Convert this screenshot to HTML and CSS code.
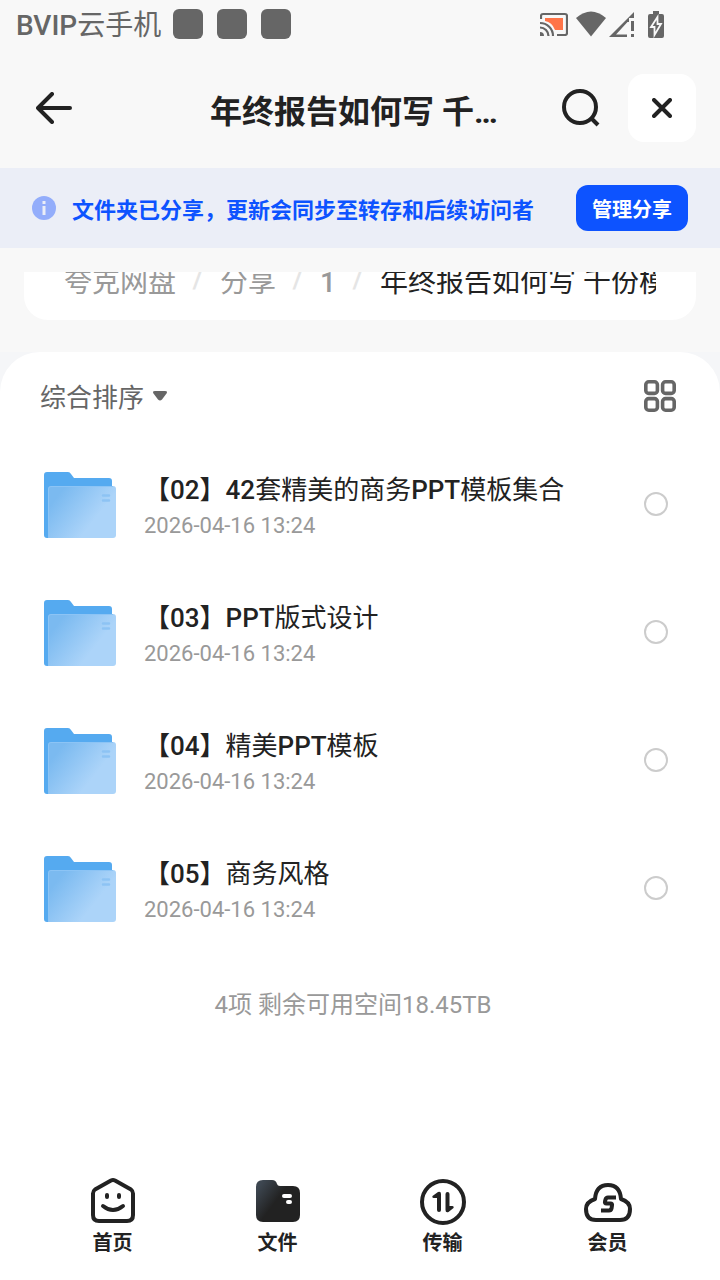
FILE: index.html
```html
<!DOCTYPE html>
<html lang="zh-CN">
<head>
  <meta charset="UTF-8" />
  <meta name="viewport" content="width=device-width, initial-scale=1.0"/>
  <title>年终报告如何写 千份模板</title>
  <link rel="stylesheet" href="styles.css">
</head>
<body>

  <!-- shared folder icon -->
  <svg class="defs" width="0" height="0" aria-hidden="true">
    <defs>
      <linearGradient id="folderFront" x1="0" y1="0.2" x2="1" y2="0.8">
        <stop offset="0.1" stop-color="#7bbaf0"/>
        <stop offset="0.7" stop-color="#acd4f9"/>
      </linearGradient>
      <linearGradient id="tabFolder" x1="0" y1="0.1" x2="0.7" y2="0.6">
        <stop offset="0.1" stop-color="#3d4650"/>
        <stop offset="0.7" stop-color="#222"/>
      </linearGradient>
      <symbol id="folder" viewBox="0 0 72 66">
        <path fill="#55aaf0" d="M3 0h21q2 0 3 2l3 4h35q3 0 3 3v57H3q-3 0-3-3V3q0-3 3-3z"/>
        <path fill="url(#folderFront)" d="M7 14h62q3 0 3 3v46q0 3-3 3H4V17q0-3 3-3z"/>
        <path fill="none" stroke="#8cc4f5" stroke-width="1" d="M4.500 66V17q0-2.500 2.500-2.500h62"/>
        <path stroke="#8dc3f4" stroke-width="2.500" stroke-linecap="round" d="M59 23.500h6M59 28.500h6"/>
      </symbol>
    </defs>
  </svg>

  <div class="status-bar">
    <span class="carrier"><b>BVIP</b>云手机</span>
    <span class="notice-dot"></span>
    <span class="notice-dot"></span>
    <span class="notice-dot"></span>
    <div class="status-icons">
      <svg class="cast" width="28" height="24" viewBox="0 0 28 24">
        <path fill="#ff7448" d="M5 6h18v12h-8Q12 10 5 9z"/>
        <path fill="none" stroke="#666" stroke-width="2.200" d="M1 7V4q0-2 2-2h22q2 0 2 2v17q0 2-2 2h-8"/>
        <path fill="none" stroke="#666" stroke-width="2.200" d="M0 11a13 13 0 0 1 13 13M0 15.500a8.500 8.500 0 0 1 8.500 8.500"/>
        <path fill="#666" d="M0 20a4 4 0 0 1 4 4H0z"/>
      </svg>
      <svg width="30" height="26" viewBox="0 0 30 26">
        <path fill="#666" d="M0 7Q15-6 30 7L15 25.500z"/>
      </svg>
      <svg width="25" height="26" viewBox="0 0 25 26">
        <path fill="#666" fill-rule="evenodd" d="M25 1v6h-5v4h-1.500L7 23.500h11V26H0z"/>
        <path fill="#666" d="M22 10h3v10h-3zM22 23h3v3h-3z"/>
      </svg>
      <svg class="battery" width="16" height="27" viewBox="0 0 16 27">
        <path fill="#666" d="M5 0h6v3h3q2 0 2 2v20q0 2-2 2H2q-2 0-2-2V5q0-2 2-2h3z"/>
        <path fill="#666" stroke="#f8f8f8" stroke-width="1.800" d="M9.500 6L3 16h3.500v8L13 13H9.500z"/>
      </svg>
    </div>
  </div>

  <header class="header">
    <button class="back-btn" type="button" aria-label="返回">
      <svg width="36" height="32" viewBox="0 0 36 32" fill="none" stroke="#222" stroke-width="4" stroke-linecap="round" stroke-linejoin="round">
        <path d="M34 16H2M16 2L2 16l14 14"/>
      </svg>
    </button>
    <h1 class="title">年终报告如何写 千份模板</h1>
    <div class="actions">
      <button class="search-btn" type="button" aria-label="搜索">
        <svg width="38" height="38" viewBox="0 0 38 38" fill="none" stroke="#222" stroke-width="4">
          <circle cx="18" cy="18" r="16"/>
          <path d="M29 29l7 7"/>
        </svg>
      </button>
      <button class="close-btn" type="button" aria-label="关闭">
        <svg width="20" height="20" viewBox="0 0 20 20" stroke="#222" stroke-width="4" stroke-linecap="round">
          <path d="M2 2l16 16M18 2L2 18"/>
        </svg>
      </button>
    </div>
  </header>

  <div class="share-notice">
    <svg width="24" height="24" viewBox="0 0 24 24">
      <circle cx="12" cy="12" r="12" fill="#93adfb"/>
      <path fill="#ebeef7" d="M10.500 5h3v3h-3zM10.500 10h3v9h-3z"/>
    </svg>
    <span class="share-text">文件夹已分享，更新会同步至转存和后续访问者</span>
    <button class="manage-btn" type="button">管理分享</button>
  </div>

  <nav class="breadcrumb" aria-label="路径">
    <div class="crumbs">
      <a href="#">夸克网盘</a>
      <span class="slash">/</span>
      <a href="#">分享</a>
      <span class="slash">/</span>
      <a href="#"><b>1</b></a>
      <span class="slash">/</span>
      <span class="current">年终报告如何写 千份模板</span>
    </div>
  </nav>

  <div class="panel-wrap">
    <main class="panel">
      <div class="toolbar">
        <label class="sort">
          <select aria-label="排序方式">
            <option>综合排序</option>
          </select>
          <svg width="14" height="10" viewBox="0 0 14 10">
            <path fill="#666" d="M2 0h10q3 0 1.500 2.500L9 8.500q-2 2-4 0L.5 2.500Q-1 0 2 0z"/>
          </svg>
        </label>
        <button class="grid-btn" type="button" aria-label="网格视图">
          <svg width="32" height="32" viewBox="0 0 32 32" fill="none" stroke="#666" stroke-width="3.600">
            <rect x="1.800" y="1.800" width="11.600" height="11.600" rx="3"/>
            <rect x="18.600" y="1.800" width="11.600" height="11.600" rx="3"/>
            <rect x="1.800" y="18.600" width="11.600" height="11.600" rx="3"/>
            <rect x="18.600" y="18.600" width="11.600" height="11.600" rx="3"/>
          </svg>
        </button>
      </div>

      <ul class="file-list">
        <li class="file">
          <svg width="72" height="66"><use href="#folder"/></svg>
          <label class="file-info" for="file1">
            <span class="file-name"><b>【02】42</b>套精美的商务<b>PPT</b>模板集合</span>
            <span class="file-date">2026-04-16 13:24</span>
          </label>
          <input type="checkbox" id="file1">
        </li>
        <li class="file">
          <svg width="72" height="66"><use href="#folder"/></svg>
          <label class="file-info" for="file2">
            <span class="file-name"><b>【03】PPT</b>版式设计</span>
            <span class="file-date">2026-04-16 13:24</span>
          </label>
          <input type="checkbox" id="file2">
        </li>
        <li class="file">
          <svg width="72" height="66"><use href="#folder"/></svg>
          <label class="file-info" for="file3">
            <span class="file-name"><b>【04】</b>精美<b>PPT</b>模板</span>
            <span class="file-date">2026-04-16 13:24</span>
          </label>
          <input type="checkbox" id="file3">
        </li>
        <li class="file">
          <svg width="72" height="66"><use href="#folder"/></svg>
          <label class="file-info" for="file4">
            <span class="file-name"><b>【05】</b>商务风格</span>
            <span class="file-date">2026-04-16 13:24</span>
          </label>
          <input type="checkbox" id="file4">
        </li>
      </ul>

      <p class="summary">4项 剩余可用空间18.45TB</p>
    </main>
  </div>

  <nav class="tab-bar" aria-label="主导航">
    <a href="#" class="tab">
      <svg width="48" height="48" viewBox="0 0 48 48" fill="none" stroke="#222" stroke-width="4" stroke-linecap="round" stroke-linejoin="round">
        <path d="M22 3.500q2-1 4 0l16 9q2 1.500 2 4V38q0 6-6 6H10q-6 0-6-6V16.500q0-2.500 2-4z"/>
        <path d="M14 29q10 8 20 0"/>
        <path d="M18 18v2M30 18v2"/>
      </svg>
      <span>首页</span>
    </a>
    <a href="#" class="tab active">
      <svg width="48" height="48" viewBox="0 0 48 48">
        <path fill="url(#tabFolder)" d="M9 3h9q4 0 5 4 .5 2 3 2h13q7 0 7 7v22q0 7-7 7H9q-7 0-7-7V10q0-7 7-7z"/>
        <path stroke="#fff" stroke-width="4" stroke-linecap="round" d="M30 19h6M34 25h2"/>
      </svg>
      <span>文件</span>
    </a>
    <a href="#" class="tab">
      <svg width="48" height="48" viewBox="0 0 48 48">
        <circle cx="24" cy="25" r="21" fill="none" stroke="#222" stroke-width="4"/>
        <path fill="#222" d="M13.500 19l5.500-4q3-1 3 2v16q0 2-2 2t-2-2V21h-3.500q-2-.5-1-2zM34.500 31l-5 4q-3 1-3-2V17q0-2 2-2t2 2v12h3q2 .5 1 2z"/>
      </svg>
      <span>传输</span>
    </a>
    <a href="#" class="tab">
      <svg width="48" height="48" viewBox="0 0 48 48">
        <path fill="none" stroke="#222" stroke-width="4" stroke-linejoin="round" d="M11 22Q12 8 24 8t13 14q9 3 9 10 0 11-10 11H12Q2 43 2 32q0-7 9-10z"/>
        <path fill="none" stroke="#222" stroke-width="4" d="M32 20.500h-8q-2 0-2.500 2l-.5 2q-.5 2 1.500 2h4q2 0 1.500 2l-.5 3q-.5 2-2.500 2h-8"/>
      </svg>
      <span>会员</span>
    </a>
  </nav>

</body>
</html>
```

FILE: styles.css
```css
* {
  box-sizing: border-box;
}

body {
  margin: 0;
  font-family: Roboto, "Noto Sans CJK SC", sans-serif;
  background: #f8f8f8;
  color: #222;
  display: flex;
  flex-direction: column;
  min-height: 100vh;
}

button {
  border: none;
  background: none;
  padding: 0;
  font-family: inherit;
  cursor: pointer;
}

svg {
  display: block;
  flex-shrink: 0;
}

a {
  color: inherit;
  text-decoration: none;
}

b {
  font-weight: 500;
}

.defs {
  position: absolute;
}

.status-bar {
  display: flex;
  align-items: center;
  gap: 14px;
  height: 48px;
  padding: 0 56px 0 16px;
  color: #666;
}

.carrier {
  padding-top: 4px;
  font-size: 28px;
  line-height: 40px;
  margin-right: -2px;
}

.notice-dot {
  width: 30px;
  height: 30px;
  border-radius: 6px;
  background: #666;
}

.status-icons {
  display: flex;
  align-items: center;
  gap: 3px;
  margin-left: auto;
}

.cast {
  margin-right: 5px;
}

.battery {
  margin-left: 11px;
}

.header {
  display: grid;
  grid-template-columns: 1fr auto 1fr;
  align-items: center;
  height: 120px;
  padding: 0 24px 0 12px;
}

.back-btn {
  justify-self: start;
  padding: 20px 24px;
}

.title {
  margin: 0;
  padding-top: 8px;
  max-width: 288px;
  font-size: 32px;
  line-height: 48px;
  font-weight: bold;
  white-space: nowrap;
  overflow: hidden;
  text-overflow: ellipsis;
}

.actions {
  display: flex;
  align-items: center;
  justify-content: flex-end;
  gap: 28px;
}

.close-btn {
  display: flex;
  align-items: center;
  justify-content: center;
  width: 68px;
  height: 68px;
  border-radius: 16px;
  background: #fff;
}

.share-notice {
  display: flex;
  align-items: center;
  min-height: 80px;
  padding: 0 32px;
  background: #ebeef7;
}

.share-text {
  flex: 1;
  margin-left: 16px;
  padding-top: 6px;
  font-size: 22px;
  line-height: 32px;
  font-weight: bold;
  color: #0d53ff;
}

.manage-btn {
  height: 46px;
  padding: 0 16px;
  border-radius: 12px;
  background: #0d53ff;
  color: #fff;
  font-size: 20px;
  font-weight: bold;
}

.breadcrumb {
  margin: 24px 24px 32px;
  padding: 0 40px 16px;
  background: #fff;
  border-radius: 0 0 24px 24px;
}

/* scrolled up, so the top of the line is hidden */
.crumbs {
  display: flex;
  align-items: flex-end;
  height: 32px;
  overflow: hidden;
  font-size: 28px;
  line-height: 42px;
  white-space: nowrap;
  color: #999;
}

.slash {
  flex: 0 0 44px;
  line-height: 50px;
  font-weight: 500;
  text-align: center;
  color: #e5e5e5;
}

.current {
  color: #222;
}

.panel-wrap {
  flex: 1;
  display: flex;
  background: #f5f6f8;
}

.panel {
  flex: 1;
  min-width: 0;
  background: #fff;
  border-radius: 40px 40px 0 0;
}

.toolbar {
  display: flex;
  align-items: center;
  justify-content: space-between;
  height: 88px;
  padding: 0 44px 0 40px;
}

.sort {
  display: flex;
  align-items: center;
  gap: 8px;
}

.sort select {
  appearance: none;
  border: none;
  padding: 4px 0 0;
  background: none;
  font-family: inherit;
  font-size: 26px;
  line-height: 40px;
  color: #666;
}

.file-list {
  list-style: none;
  margin: 0;
  padding: 0;
}

.file {
  display: flex;
  align-items: center;
  height: 128px;
  padding: 0 52px 0 44px;
}

.file svg {
  margin-top: 2px;
}

.file-info {
  flex: 1;
  min-width: 0;
  margin: 0 28px;
  padding-top: 4px;
}

.file-name,
.file-date {
  display: block;
}

.file-name {
  font-size: 26px;
  line-height: 40px;
}

.file-date {
  font-size: 22px;
  line-height: 32px;
  color: #999;
}

.file input {
  appearance: none;
  width: 24px;
  height: 24px;
  margin: 0;
  border: 2px solid #ccc;
  border-radius: 50%;
}

.file input:checked {
  background: #0d53ff;
  border-color: #0d53ff;
}

.summary {
  margin: 32px 0;
  padding-right: 14px;
  font-size: 24px;
  line-height: 42px;
  text-align: center;
  color: #999;
}

.tab-bar {
  display: flex;
  padding: 16px 30px 23px;
  background: #fff;
}

.tab {
  flex: 1;
  display: flex;
  flex-direction: column;
  align-items: center;
  gap: 4px;
  font-size: 20px;
  line-height: 28px;
  font-weight: bold;
}
```
